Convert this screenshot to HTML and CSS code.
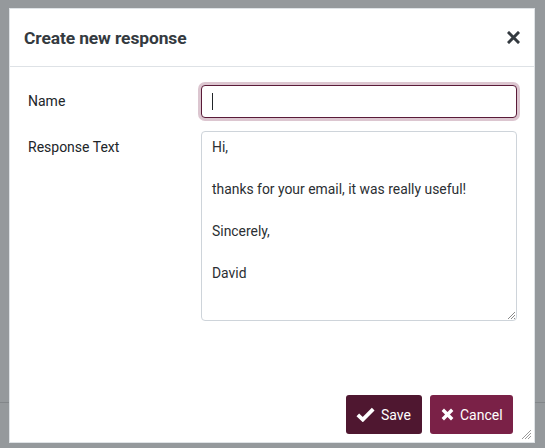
FILE: index.html
```html
<!DOCTYPE html>
<html>
<head>
<meta charset="utf-8">
<link rel="stylesheet" href="styles.css">
</head>
<body>
<div class="backdrop">
  <div class="bg-line"></div>
  <div class="modal">
    <div class="modal-header">
      <h1 class="modal-title">Create new response</h1>
      <button class="close" aria-label="Close">
        <svg width="13" height="13" viewBox="0 0 13 13"><path d="M2 2 L11 11 M11 2 L2 11" stroke="#343a40" stroke-width="3" stroke-linecap="square"/></svg>
      </button>
    </div>
    <div class="modal-body">
      <label class="form-label">Name</label>
      <div class="field"><input class="input focused" type="text" value=""><span class="caret"></span></div>
      <label class="form-label">Response Text</label>
      <div class="field"><div class="textarea">Hi,<br><br>thanks for your email, it was really useful!<br><br>Sincerely,<br><br>David</div>
        <svg class="grip" width="9" height="9" viewBox="0 0 9 9"><path d="M8 1 L1 8 M8 4 L4 8 M8 7 L7 8" stroke="#8a8a8a" stroke-width="1"/></svg>
      </div>
    </div>
    <div class="modal-footer">
      <button class="btn btn-save">
        <svg width="19" height="15" viewBox="0 0 19 15"><path d="M1.8 7.8 L6.8 12.6 L17.2 2.2" fill="none" stroke="#fff" stroke-width="3.8"/></svg>
        Save
      </button>
      <button class="btn btn-cancel">
        <svg width="13" height="13" viewBox="0 0 13 13"><path d="M1.8 1.8 L11.2 11.2 M11.2 1.8 L1.8 11.2" stroke="#fff" stroke-width="3.4"/></svg>
        Cancel
      </button>
    </div>
    <svg class="modal-grip" width="11" height="11" viewBox="0 0 11 11"><path d="M10 1 L1 10 M10 4 L4 10 M10 7 L7 10" stroke="#9a9a9a" stroke-width="1"/></svg>
  </div>
</div>
</body>
</html>
```
FILE: styles.css
```css
* { box-sizing: border-box; }
html, body { margin: 0; padding: 0; }
body {
  width: 545px;
  height: 448px;
  overflow: hidden;
  background: #95999c;
  font-family: Roboto, "Liberation Sans", sans-serif;
  color: #212529;
}
.backdrop {
  position: relative;
  width: 545px;
  height: 448px;
  padding: 8px 10px 0 9px;
}
.bg-line {
  position: absolute;
  left: 0;
  right: 0;
  top: 402px;
  height: 1px;
  background: #828689;
}
.modal {
  position: relative;
  width: 526px;
  height: 435px;
  background: #fff;
  border: 1px solid #dfe3e6;
  display: flex;
  flex-direction: column;
}
.modal-header {
  height: 58px;
  border-bottom: 1px solid #dee2e6;
  display: flex;
  align-items: center;
  justify-content: space-between;
  padding: 0 14px 0 14px;
}
.modal-title {
  margin: 0;
  font-size: 17.4px;
  font-weight: 700;
  color: #343a40;
  letter-spacing: -0.1px;
}
.close {
  border: 0;
  background: none;
  padding: 0;
  width: 13px;
  height: 13px;
  display: flex;
}
.modal-body {
  flex: 1;
  display: grid;
  grid-template-columns: 173px 316px;
  grid-auto-rows: min-content;
  row-gap: 13px;
  padding: 18px 0 0 18px;
}
.form-label {
  font-size: 14px;
  padding: 6px 0 0 0;
  color: #212529;
  line-height: 20px;
}
.field { position: relative; }
.input {
  display: block;
  width: 316px;
  height: 33px;
  border: 1px solid #5a1b38;
  border-radius: 4px;
  box-shadow: 0 0 0 3px #dcc6d0;
  outline: none;
  font: inherit;
  padding: 0 10px;
}
.caret {
  position: absolute;
  left: 11px;
  top: 8px;
  width: 1px;
  height: 17px;
  background: #212529;
}
.textarea {
  width: 316px;
  height: 190px;
  border: 1px solid #ced4da;
  border-radius: 4px;
  padding: 5px 10px;
  font-size: 13.9px;
  line-height: 21px;
  color: #2b2f33;
}
.grip {
  position: absolute;
  right: 1px;
  bottom: 1px;
}
.modal-footer {
  display: flex;
  justify-content: flex-end;
  gap: 8px;
  padding: 0 21px 8px 0;
}
.btn {
  border: 0;
  border-radius: 3px;
  height: 39px;
  color: #fff;
  font-family: inherit;
  font-size: 14px;
  display: flex;
  align-items: center;
  gap: 6px;
  padding: 0 10px 0 10px;
}
.btn-save { background: #4f1730; width: 76px; }
.btn-cancel { background: #7a2147; width: 83px; gap: 6px; padding-left: 11px; }
.modal-grip {
  position: absolute;
  right: 2px;
  bottom: 2px;
}
```
